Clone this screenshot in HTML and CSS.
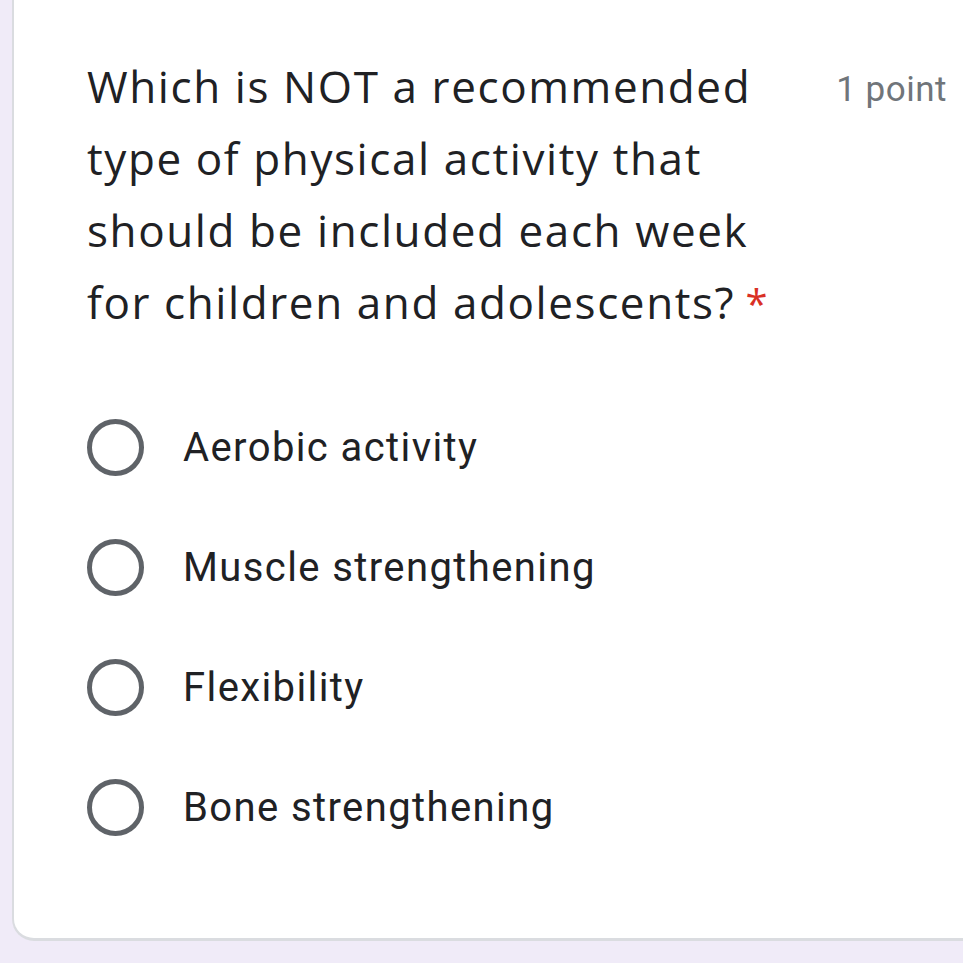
FILE: index.html
```html
<!DOCTYPE html>
<html>
<head>
<meta charset="utf-8">
<link rel="stylesheet" href="styles.css">
</head>
<body>
<div class="card">
  <div class="header">
    <div class="question">Which is NOT a recommended type of physical activity that should be included each week for children and <span class="nowrap">adolescents?<span class="req"> *</span></span></div>
    <div class="points">1 point</div>
  </div>
  <div class="options">
    <div class="option"><span class="radio"></span><span class="label">Aerobic activity</span></div>
    <div class="option"><span class="radio"></span><span class="label">Muscle strengthening</span></div>
    <div class="option"><span class="radio"></span><span class="label">Flexibility</span></div>
    <div class="option"><span class="radio"></span><span class="label">Bone strengthening</span></div>
  </div>
</div>
</body>
</html>
```
FILE: styles.css
```css
html, body {
  margin: 0;
  padding: 0;
  background: #f0ebf8;
  width: 963px;
  height: 963px;
  overflow: hidden;
}
.card {
  margin-left: 12px;
  height: 941px;
  box-sizing: border-box;
  background: #fff;
  border-left: 2px solid #dadce0;
  border-bottom: 3px solid #dadce0;
  border-bottom-left-radius: 22px;
  padding: 50px 16px 0 73px;
  font-family: Roboto, "Noto Sans", sans-serif;
}
.header {
  display: flex;
  justify-content: space-between;
  align-items: flex-start;
}
.question {
  width: 700px;
  font-family: "Open Sans", Roboto, sans-serif;
  font-size: 44px;
  letter-spacing: 1.6px;
  line-height: 72px;
  color: #202124;
}
.nowrap {
  white-space: nowrap;
}
.req {
  color: #d93025;
  font-size: 40px;
  letter-spacing: 0;
}
.points {
  font-size: 35px;
  letter-spacing: 0.5px;
  line-height: 72px;
  color: #70757a;
  padding-top: 4px;
  white-space: nowrap;
}
.options {
  margin-top: 47px;
  display: flex;
  flex-direction: column;
}
.option {
  display: flex;
  align-items: center;
  height: 120px;
}
.radio {
  width: 57px;
  height: 57px;
  box-sizing: border-box;
  border: 5.5px solid #5f6368;
  border-radius: 50%;
  flex: none;
}
.label {
  margin-left: 39px;
  font-size: 40px;
  letter-spacing: 1.4px;
  color: #202124;
}
```
